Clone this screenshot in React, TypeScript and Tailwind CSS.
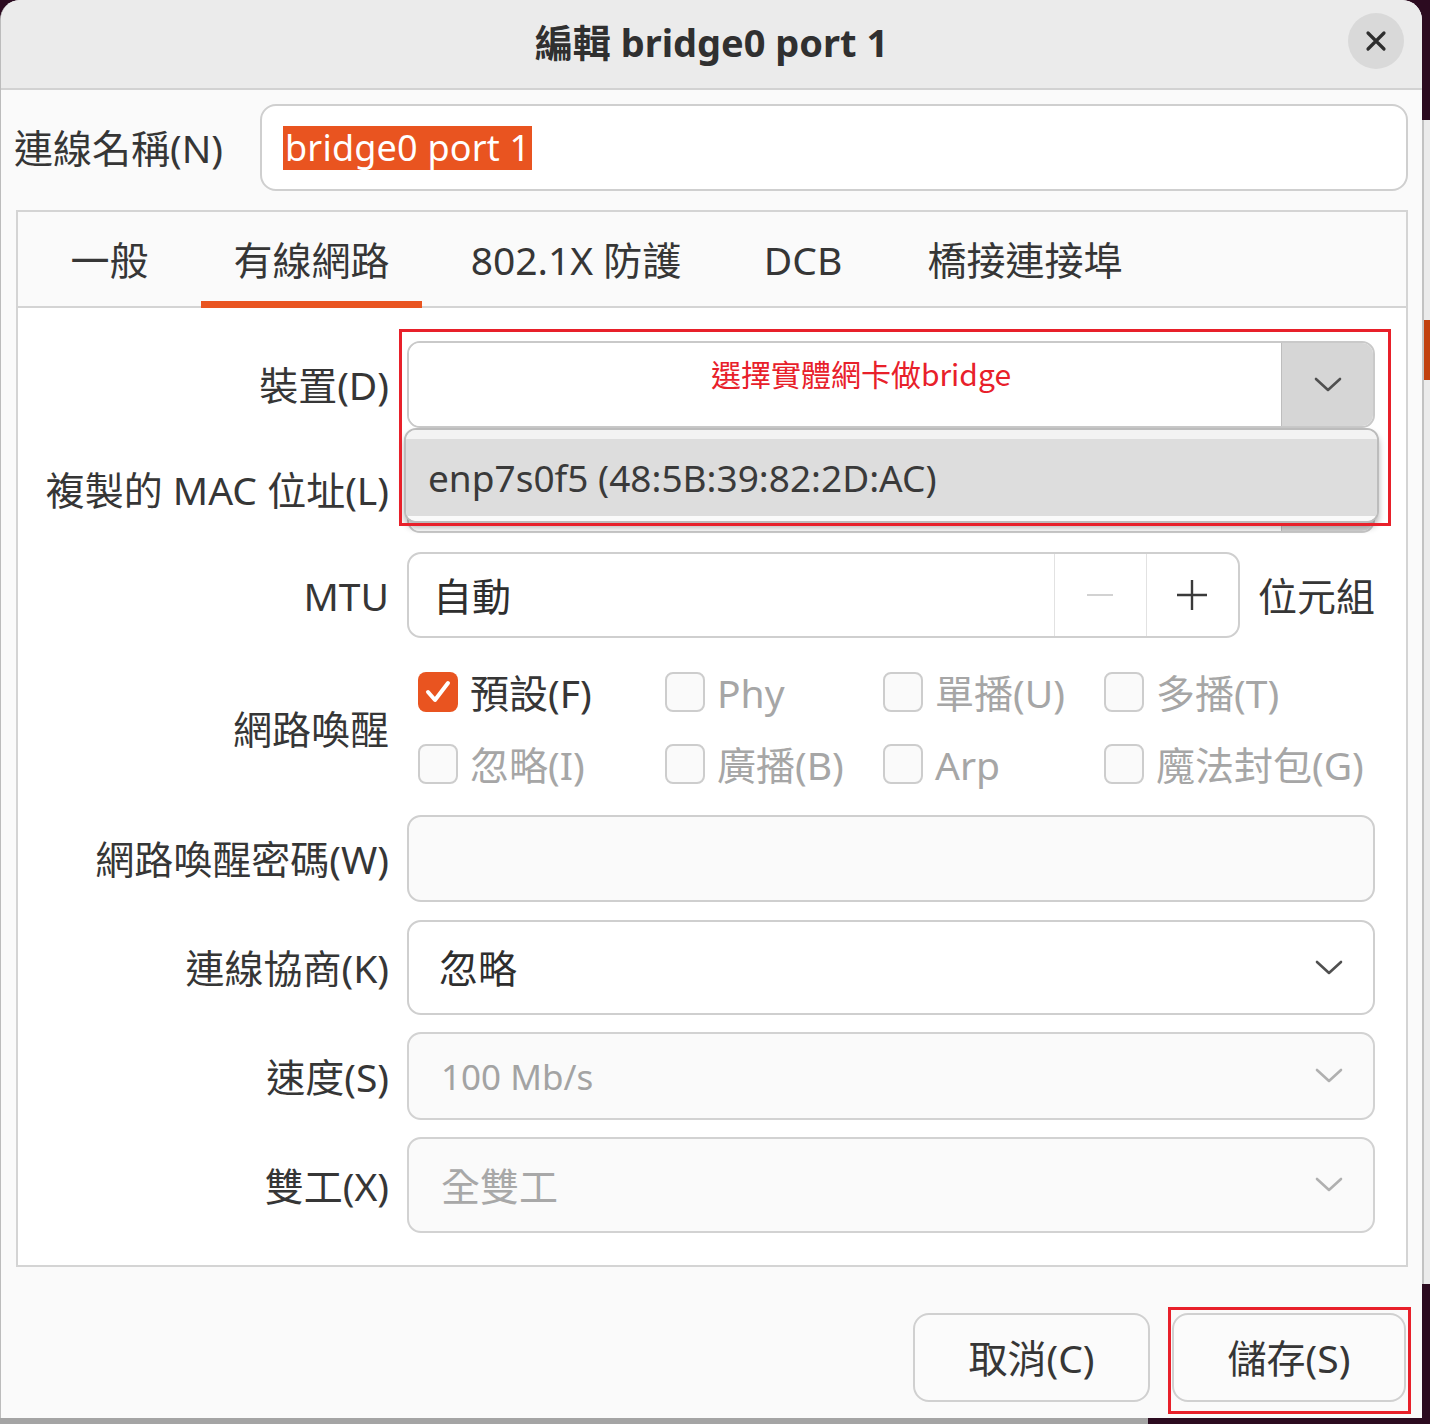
import React from "react";

function Chevron({ cls }: { cls: string }) {
  return (
    <svg width="28" height="16" viewBox="0 0 28 16" className={cls} fill="none">
      <path d="M2 2 L14 13 L26 2" stroke="currentColor" strokeWidth="2.6" strokeLinecap="round" strokeLinejoin="round" />
    </svg>
  );
}

function Check({ checked, label }: { checked?: boolean; label: string }) {
  return (
    <div className="flex items-center h-full">
      {checked ? (
        <div className="w-[40px] h-[40px] rounded-[8px] bg-[#e95420] flex items-center justify-center shrink-0">
          <svg width="40" height="40" viewBox="0 0 40 40" fill="none">
            <path d="M10 20 L17 28 L30 11" stroke="#ffffff" strokeWidth="4" strokeLinecap="round" strokeLinejoin="round" />
          </svg>
        </div>
      ) : (
        <div className="w-[40px] h-[40px] rounded-[8px] border-2 border-[#cdcdcd] bg-[#fafafa] shrink-0" />
      )}
      <span className={checked ? "ml-[12px] text-[39px] leading-none text-[#363636]" : "ml-[12px] text-[39px] leading-none text-[#a6a6a6]"}>
        {label}
      </span>
    </div>
  );
}

function Row({ label, h, mt, children }: { label: string; h: string; mt: string; children: React.ReactNode }) {
  return (
    <div className={"flex items-center " + h + " " + mt}>
      <div className="w-[371px] text-right text-[39px] leading-none text-[#363636] whitespace-nowrap">{label}</div>
      <div className="ml-[18px] w-[968px] h-full relative">{children}</div>
    </div>
  );
}

export default function App() {
  return (
    <div className="w-[1430px] h-[1424px] bg-[#2c0b20] flex flex-col overflow-hidden font-['Noto_Sans','Noto_Sans_CJK_TC',sans-serif]">
      <div className="flex h-[1418px]">
        {/* Dialog */}
        <div className="w-[1422px] h-full bg-[#fafafa] rounded-t-[20px] flex flex-col overflow-hidden border-l border-[#bcbcbc]">
          {/* Title bar */}
          <div className="h-[90px] bg-[#ebebeb] border-b-2 border-[#d2d2d2] grid grid-cols-[1fr_auto_1fr] items-center shrink-0">
            <div />
            <div className="text-[38px] font-bold leading-none text-[#303030] pb-[4px]">編輯 bridge0 port 1</div>
            <div className="flex justify-end pr-[18px] pb-[6px]">
              <div className="w-[56px] h-[56px] rounded-full bg-[#d9d9d9] flex items-center justify-center">
                <svg width="22" height="22" viewBox="0 0 22 22" fill="none">
                  <path d="M3 3 L19 19 M19 3 L3 19" stroke="#2e2e2e" strokeWidth="3.2" strokeLinecap="round" />
                </svg>
              </div>
            </div>
          </div>

          {/* Name row */}
          <div className="flex items-center mt-[14px] pl-[13px] pr-[14px] shrink-0">
            <div className="w-[246px] text-[39px] leading-none text-[#363636] whitespace-nowrap">連線名稱(N)</div>
            <div className="flex-1 h-[87px] border-2 border-[#cfcfcf] rounded-[16px] bg-white flex items-center pl-[21px]">
              <span className="bg-[#e95420] text-white text-[36px] leading-[44px] h-[44px] px-[2px] tracking-[0.2px]">bridge0 port 1</span>
            </div>
          </div>

          {/* Notebook */}
          <div className="mt-[19px] ml-[15px] mr-[14px] h-[1057px] border-2 border-[#d4d4d4] flex flex-col shrink-0">
            <div className="h-[96px] bg-[#fafafa] border-b-2 border-[#d4d4d4] flex shrink-0">
              <div className="w-[183px] flex items-center justify-center text-[39px] leading-none text-[#363636]">一般</div>
              <div className="w-[221px] relative flex items-center justify-center text-[39px] leading-none text-[#363636]">
                有線網路
                <div className="absolute left-0 right-0 bottom-[-2px] h-[7px] bg-[#e95420]" />
              </div>
              <div className="w-[308px] flex items-center justify-center text-[39px] leading-none text-[#363636]">802.1X 防護</div>
              <div className="w-[146px] flex items-center justify-center text-[39px] leading-none text-[#363636]">DCB</div>
              <div className="w-[298px] flex items-center justify-center text-[39px] leading-none text-[#363636]">橋接連接埠</div>
            </div>

            <div className="flex-1 bg-white flex flex-col">
              {/* Device */}
              <Row label="裝置(D)" h="h-[87px]" mt="mt-[33px]">
                <div className="h-full flex border-2 border-[#c9c9c9] rounded-[13px] overflow-hidden">
                  <div className="flex-1 bg-white flex justify-center items-start pt-[12px] pl-[32px]">
                    <span className="text-[30px] leading-[36px] text-[#e8202a] font-['Noto_Sans_CJK_TC','Noto_Sans',sans-serif]">選擇實體網卡做bridge</span>
                  </div>
                  <div className="w-[92px] bg-[#d6d6d6] border-l border-[#bdbdbd] flex items-center justify-center">
                    <Chevron cls="text-[#505050]" />
                  </div>
                </div>
                {/* Popup */}
                <div className="absolute left-[-3px] top-[87px] w-[975px] h-[95px] z-10 rounded-[12px] border-2 border-[#bcbcbc] bg-[#f7f7f7] overflow-hidden flex flex-col shadow-[0_5px_6px_rgba(0,0,0,0.28)]">
                  <div className="h-[9px] bg-[#f3f3f3]" />
                  <div className="h-[77px] bg-[#dddddd] flex items-center pl-[22px]">
                    <span className="text-[37px] leading-none text-[#3a3a3a]">enp7s0f5 (48:5B:39:82:2D:AC)</span>
                  </div>
                  <div className="flex-1 bg-[#fafafa]" />
                </div>
                {/* Annotation */}
                <div className="absolute left-[-8px] top-[-12px] w-[992px] h-[197px] border-[3px] border-[#e8202a] z-20" />
              </Row>

              {/* MAC */}
              <Row label="複製的 MAC 位址(L)" h="h-[87px]" mt="mt-[18px]">
                <div className="h-full flex border-2 border-[#c9c9c9] rounded-[13px] overflow-hidden">
                  <div className="flex-1 bg-white" />
                  <div className="w-[92px] bg-[#d6d6d6] border-l border-[#bdbdbd]" />
                </div>
              </Row>

              {/* MTU */}
              <Row label="MTU" h="h-[86px]" mt="mt-[19px]">
                <div className="h-full flex items-center">
                  <div className="w-[834px] h-full flex border-2 border-[#cfcfcf] rounded-[14px] overflow-hidden bg-white">
                    <div className="flex-1 flex items-center pl-[24px] text-[39px] leading-none text-[#2e2e2e]">自動</div>
                    <div className="w-[92px] border-l border-[#e2e2e2] flex items-center justify-center">
                      <svg width="28" height="4" viewBox="0 0 28 4"><path d="M1 2 H27" stroke="#d2d2d2" strokeWidth="2" /></svg>
                    </div>
                    <div className="w-[92px] border-l border-[#e2e2e2] flex items-center justify-center">
                      <svg width="32" height="32" viewBox="0 0 32 32"><path d="M16 1 V31 M1 16 H31" stroke="#3a3a3a" strokeWidth="2.4" /></svg>
                    </div>
                  </div>
                  <div className="ml-[18px] text-[39px] leading-none text-[#363636] whitespace-nowrap">位元組</div>
                </div>
              </Row>

              {/* WoL */}
              <Row label="網路喚醒" h="h-[144px]" mt="mt-[18px]">
                <div className="h-full pl-[11px] grid grid-cols-[247px_218px_221px_auto] grid-rows-[72px_72px]">
                  <Check checked label="預設(F)" />
                  <Check label="Phy" />
                  <Check label="單播(U)" />
                  <Check label="多播(T)" />
                  <Check label="忽略(I)" />
                  <Check label="廣播(B)" />
                  <Check label="Arp" />
                  <Check label="魔法封包(G)" />
                </div>
              </Row>

              {/* Password */}
              <Row label="網路喚醒密碼(W)" h="h-[87px]" mt="mt-[15px]">
                <div className="h-full border-2 border-[#cfcfcf] rounded-[14px] bg-[#fafafa]" />
              </Row>

              {/* Negotiation */}
              <Row label="連線協商(K)" h="h-[95px]" mt="mt-[18px]">
                <div className="h-full border-2 border-[#cfcfcf] rounded-[14px] bg-white flex items-center pl-[30px] pr-[30px]">
                  <span className="flex-1 text-[39px] leading-none text-[#2e2e2e]">忽略</span>
                  <Chevron cls="text-[#505050]" />
                </div>
              </Row>

              {/* Speed */}
              <Row label="速度(S)" h="h-[88px]" mt="mt-[17px]">
                <div className="h-full border-2 border-[#d2d2d2] rounded-[14px] bg-[#fafafa] flex items-center pl-[32px] pr-[30px]">
                  <span className="flex-1 text-[35px] leading-none text-[#a3a3a3]">100 Mb/s</span>
                  <Chevron cls="text-[#b0b0b0]" />
                </div>
              </Row>

              {/* Duplex */}
              <Row label="雙工(X)" h="h-[96px]" mt="mt-[17px]">
                <div className="h-full border-2 border-[#d2d2d2] rounded-[14px] bg-[#fafafa] flex items-center pl-[32px] pr-[30px]">
                  <span className="flex-1 text-[39px] leading-none text-[#a8a8a8]">全雙工</span>
                  <Chevron cls="text-[#b0b0b0]" />
                </div>
              </Row>
            </div>
          </div>

          {/* Actions */}
          <div className="flex justify-end items-start pt-[46px] pr-[16px]">
            <div className="w-[237px] h-[89px] border-2 border-[#d0d0d0] rounded-[16px] bg-[#fbfbfb] flex items-center justify-center text-[39px] leading-none text-[#363636]">
              取消(C)
            </div>
            <div className="relative ml-[22px]">
              <div className="w-[234px] h-[89px] border-2 border-[#d0d0d0] rounded-[16px] bg-[#fbfbfb] flex items-center justify-center text-[39px] leading-none text-[#363636]">
                儲存(S)
              </div>
              <div className="absolute left-[-4px] top-[-6px] w-[243px] h-[107px] border-[3px] border-[#e8202a]" />
            </div>
          </div>
        </div>

        {/* Right edge: another window behind */}
        <div className="w-[8px] flex flex-col">
          <div className="h-[120px]" />
          <div className="h-[1164px] bg-[#ebebeb] border-l-2 border-[#c2c2c2] flex flex-col">
            <div className="h-[200px]" />
            <div className="h-[60px] bg-[#c2410f]" />
          </div>
          <div className="flex-1" />
        </div>
      </div>
      <div className="flex h-[6px]">
        <div className="w-[1148px] bg-[#a4a4a4]" />
        <div className="flex-1" />
      </div>
    </div>
  );
}
